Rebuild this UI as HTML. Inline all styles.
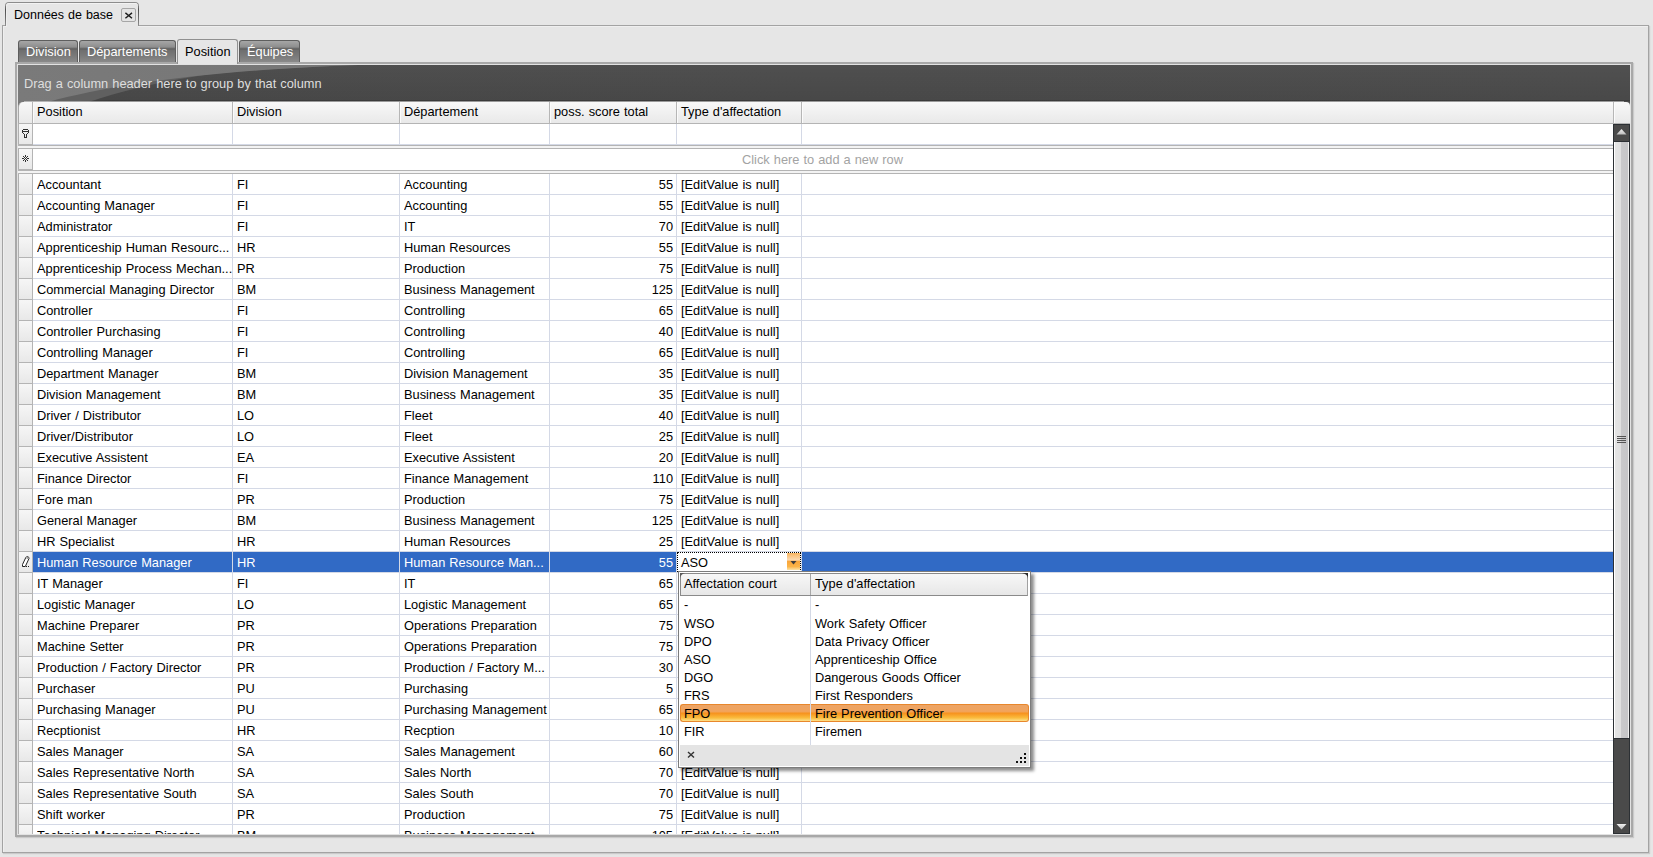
<!DOCTYPE html><html><head><meta charset="utf-8"><style>
*{margin:0;padding:0;box-sizing:border-box}
html,body{width:1653px;height:857px;overflow:hidden;background:#e6e6e6;font-family:"Liberation Sans", sans-serif;font-size:12.8px;word-spacing:0.5px;color:#000}
.a{position:absolute}
.t{position:absolute;white-space:pre;line-height:22px;height:22px}
</style></head><body><div class="a" style="left:2px;top:25px;width:1647px;height:828px;border:1px solid #a3a3a3;box-shadow:1px 1px 1px rgba(0,0,0,0.12);"></div><div class="a" style="left:3px;top:26px;width:1645px;height:826px;border-left:1px solid #efefef;border-top:1px solid #efefef;"></div><div class="a" style="left:5px;top:2px;width:134px;height:24px;border:1px solid #8c8c8c;border-bottom:none;border-radius:4px 4px 0 0;background:#e6e6e6;"></div><div class="a" style="left:6px;top:25px;width:132px;height:2px;background:#e6e6e6;"></div><div class="a" style="left:5px;top:6px;width:1px;height:19px;background:linear-gradient(#7a7a7a,#505050 20%,#6a6a6a 60%,#8c8c8c)"></div><div class="a" style="left:138px;top:6px;width:1px;height:19px;background:linear-gradient(#7a7a7a,#505050 20%,#6a6a6a 60%,#8c8c8c)"></div><div class="a" style="left:6px;top:3px;width:132px;height:24px;border-left:1px solid #eeeeee;border-top:1px solid #f2f2f2;border-radius:3px 3px 0 0;"></div><div class="t" style="left:14px;top:4px;font-size:12.5px">Données de base</div><div class="a" style="left:121px;top:8px;width:15px;height:14px;border:1px solid #a6a6a6;border-radius:2px;background:#e4e4e4;"></div><svg class="a" style="left:121px;top:8px" width="15" height="14"><path d="M4.4 4.9 L11 10.2 M11 4.9 L4.4 10.2" stroke="#1e1e1e" stroke-width="1.4"/></svg><div class="a" style="left:18px;top:40px;width:60px;height:23px;border:1px solid #5e5e5e;border-bottom:none;border-radius:3px 3px 0 0;background:linear-gradient(#a6a6a6 0px,#8e8e8e 6px,#5c5c5c 8px,#6e6e6e 9px,#7a7a7a 15px,#8c8c8c 22px);"></div><div class="t" style="left:26px;top:41px;color:#fff">Division</div><div class="a" style="left:79px;top:40px;width:97px;height:23px;border:1px solid #5e5e5e;border-bottom:none;border-radius:3px 3px 0 0;background:linear-gradient(#a6a6a6 0px,#8e8e8e 6px,#5c5c5c 8px,#6e6e6e 9px,#7a7a7a 15px,#8c8c8c 22px);"></div><div class="t" style="left:87px;top:41px;color:#fff">Départements</div><div class="a" style="left:239px;top:40px;width:61px;height:23px;border:1px solid #5e5e5e;border-bottom:none;border-radius:3px 3px 0 0;background:linear-gradient(#a6a6a6 0px,#8e8e8e 6px,#5c5c5c 8px,#6e6e6e 9px,#7a7a7a 15px,#8c8c8c 22px);"></div><div class="t" style="left:247px;top:41px;color:#fff">Équipes</div><div class="a" style="left:177px;top:39px;width:61px;height:25px;border:1px solid #909090;border-bottom:none;border-radius:3px 3px 0 0;background:#e6e6e6;z-index:3"></div><div class="t" style="left:185px;top:41px;z-index:4">Position</div><div class="a" style="left:15px;top:62px;width:1618px;height:775px;border:2px solid #a8a8a8;background:#e2e2e2;z-index:2;box-shadow:1px 1px 1px rgba(0,0,0,0.12)"></div><div class="a" style="left:0;top:0;width:1653px;height:857px;z-index:2"><div class="a" style="left:18px;top:65px;width:1612px;height:37px;background:#4f4f4f;overflow:hidden"><svg width="1612" height="37" style="position:absolute;left:0;top:0"><defs><linearGradient id="gl" x1="0" y1="0" x2="1" y2="0"><stop offset="0" stop-color="#7a7a7a"/><stop offset="1" stop-color="#767676"/></linearGradient><linearGradient id="gb" x1="0" y1="0" x2="1" y2="0"><stop offset="0" stop-color="#4e4e4e"/><stop offset="1" stop-color="#505050"/></linearGradient><linearGradient id="gv" x1="0" y1="0" x2="0" y2="1"><stop offset="0" stop-color="#000" stop-opacity="0"/><stop offset="1" stop-color="#000" stop-opacity="0.1"/></linearGradient></defs><rect width="1612" height="37" fill="url(#gb)"/><rect width="1612" height="37" fill="url(#gv)"/><path d="M0 0 L340 0 C 240 4, 200 8, 180 11 C 140 17, 100 27, 71 37 L0 37 Z" fill="#606060"/><path d="M0 0 L340 0 C 200 5, 100 18, 30 37 L0 37 Z" fill="url(#gl)"/></svg><div class="t" style="left:6px;top:8px;color:#dedede">Drag a column header here to group by that column</div></div><div class="a" style="left:18px;top:100px;width:1612px;height:1px;background:linear-gradient(90deg,rgba(0,0,0,0) 0px,rgba(0,0,0,0) 60px,rgba(0,0,0,0.18) 90px)"></div><div class="a" style="left:24px;top:101px;width:1600px;height:1px;background:rgba(255,255,255,0.45)"></div><div class="a" style="left:18px;top:102px;width:8px;height:6px;background:#787878"></div><div class="a" style="left:1620px;top:102px;width:10px;height:6px;background:#4f4f4f"></div><div class="a" style="left:18px;top:102px;width:1612px;height:22px;border-radius:5px 4px 0 0;background:linear-gradient(#f8f8f8,#e9e9e9);border-bottom:1px solid #b4b4b4;border-left:1px solid #a8a8a8;overflow:hidden"></div><div class="a" style="left:32px;top:102px;width:1px;height:21px;background:#b6b6b6"></div><div class="a" style="left:33px;top:103px;width:1px;height:20px;background:#fbfbfb"></div><div class="a" style="left:232px;top:102px;width:1px;height:21px;background:#b6b6b6"></div><div class="a" style="left:233px;top:103px;width:1px;height:20px;background:#fbfbfb"></div><div class="a" style="left:399px;top:102px;width:1px;height:21px;background:#b6b6b6"></div><div class="a" style="left:400px;top:103px;width:1px;height:20px;background:#fbfbfb"></div><div class="a" style="left:549px;top:102px;width:1px;height:21px;background:#b6b6b6"></div><div class="a" style="left:550px;top:103px;width:1px;height:20px;background:#fbfbfb"></div><div class="a" style="left:676px;top:102px;width:1px;height:21px;background:#b6b6b6"></div><div class="a" style="left:677px;top:103px;width:1px;height:20px;background:#fbfbfb"></div><div class="a" style="left:801px;top:102px;width:1px;height:21px;background:#b6b6b6"></div><div class="a" style="left:802px;top:103px;width:1px;height:20px;background:#fbfbfb"></div><div class="a" style="left:1613px;top:102px;width:1px;height:21px;background:#b6b6b6"></div><div class="a" style="left:1614px;top:103px;width:1px;height:20px;background:#fbfbfb"></div><div class="t" style="left:37px;top:101px">Position</div><div class="t" style="left:237px;top:101px">Division</div><div class="t" style="left:404px;top:101px">Département</div><div class="t" style="left:554px;top:101px">poss. score total</div><div class="t" style="left:681px;top:101px">Type d'affectation</div><div class="a" style="left:33px;top:124px;width:1580px;height:710px;background:#fff"></div><div class="a" style="left:18px;top:124px;width:15px;height:710px;background:#e2e2e2;border-left:1px solid #b0b0b0;border-right:1px solid #b4b4b4"></div><div class="a" style="left:19px;top:124px;width:13px;height:20px;background:linear-gradient(#f6f6f6,#e8e8e8)"></div><div class="a" style="left:18px;top:144px;width:1595px;height:1px;background:#d4d9e6"></div><div class="a" style="left:18px;top:144px;width:15px;height:1px;background:#b4b4b4"></div><div class="a" style="left:232px;top:124px;width:1px;height:20px;background:#d4d9e6"></div><div class="a" style="left:399px;top:124px;width:1px;height:20px;background:#d4d9e6"></div><div class="a" style="left:549px;top:124px;width:1px;height:20px;background:#d4d9e6"></div><div class="a" style="left:676px;top:124px;width:1px;height:20px;background:#d4d9e6"></div><div class="a" style="left:801px;top:124px;width:1px;height:20px;background:#d4d9e6"></div><div class="a" style="left:18px;top:145px;width:1595px;height:1px;background:#b4b4b4"></div><div class="a" style="left:18px;top:146px;width:1595px;height:2px;background:#f3f3f3"></div><div class="a" style="left:18px;top:148px;width:1595px;height:1px;background:#b4b4b4"></div><div class="a" style="left:19px;top:149px;width:13px;height:20px;background:linear-gradient(#f6f6f6,#e8e8e8)"></div><div class="a" style="left:18px;top:169px;width:15px;height:1px;background:#b4b4b4"></div><div class="a" style="left:18px;top:170px;width:1595px;height:1px;background:#b4b4b4"></div><div class="a" style="left:18px;top:171px;width:1595px;height:2px;background:#f3f3f3"></div><div class="a" style="left:18px;top:173px;width:1595px;height:1px;background:#b4b4b4"></div><div class="t" style="left:742px;top:149px;color:#a3a3a3">Click here to add a new row</div><svg class="a" style="left:19px;top:125px" width="13" height="16"><rect x="4" y="4" width="1" height="1" fill="#303030"/><rect x="5" y="4" width="1" height="1" fill="#303030"/><rect x="6" y="4" width="1" height="1" fill="#303030"/><rect x="7" y="4" width="1" height="1" fill="#303030"/><rect x="8" y="4" width="1" height="1" fill="#303030"/><rect x="4" y="6" width="1" height="1" fill="#303030"/><rect x="5" y="6" width="1" height="1" fill="#303030"/><rect x="6" y="6" width="1" height="1" fill="#303030"/><rect x="7" y="6" width="1" height="1" fill="#303030"/><rect x="8" y="6" width="1" height="1" fill="#303030"/><rect x="3" y="5" width="1" height="1" fill="#303030"/><rect x="3" y="6" width="1" height="1" fill="#303030"/><rect x="3" y="7" width="1" height="1" fill="#303030"/><rect x="9" y="5" width="1" height="1" fill="#303030"/><rect x="9" y="6" width="1" height="1" fill="#303030"/><rect x="9" y="7" width="1" height="1" fill="#303030"/><rect x="4" y="8" width="1" height="1" fill="#303030"/><rect x="8" y="8" width="1" height="1" fill="#303030"/><rect x="5" y="9" width="1" height="1" fill="#303030"/><rect x="5" y="10" width="1" height="1" fill="#303030"/><rect x="5" y="11" width="1" height="1" fill="#303030"/><rect x="5" y="12" width="1" height="1" fill="#303030"/><rect x="7" y="9" width="1" height="1" fill="#303030"/><rect x="7" y="10" width="1" height="1" fill="#303030"/><rect x="7" y="11" width="1" height="1" fill="#303030"/><rect x="7" y="12" width="1" height="1" fill="#303030"/><rect x="6" y="12" width="1" height="1" fill="#303030"/></svg><svg class="a" style="left:19px;top:150px" width="13" height="16"><rect x="6" y="5" width="1" height="1" fill="#303030"/><rect x="6" y="6" width="1" height="1" fill="#303030"/><rect x="4" y="6" width="1" height="1" fill="#303030"/><rect x="8" y="6" width="1" height="1" fill="#303030"/><rect x="5" y="7" width="1" height="1" fill="#303030"/><rect x="7" y="7" width="1" height="1" fill="#303030"/><rect x="3" y="8" width="1" height="1" fill="#303030"/><rect x="4" y="8" width="1" height="1" fill="#303030"/><rect x="6" y="8" width="1" height="1" fill="#303030"/><rect x="8" y="8" width="1" height="1" fill="#303030"/><rect x="9" y="8" width="1" height="1" fill="#303030"/><rect x="5" y="9" width="1" height="1" fill="#303030"/><rect x="7" y="9" width="1" height="1" fill="#303030"/><rect x="4" y="10" width="1" height="1" fill="#303030"/><rect x="8" y="10" width="1" height="1" fill="#303030"/><rect x="6" y="10" width="1" height="1" fill="#303030"/><rect x="6" y="11" width="1" height="1" fill="#303030"/></svg><div class="a" style="left:0;top:0;width:1653px;height:834px;overflow:hidden"><div class="a" style="left:19px;top:174px;width:13px;height:20px;background:linear-gradient(#f6f6f6,#e8e8e8)"></div><div class="a" style="left:18px;top:194px;width:15px;height:1px;background:#b4b4b4"></div><div class="a" style="left:33px;top:194px;width:1580px;height:1px;background:#d4d9e6"></div><div class="a" style="left:232px;top:174px;width:1px;height:21px;background:#d4d9e6"></div><div class="a" style="left:399px;top:174px;width:1px;height:21px;background:#d4d9e6"></div><div class="a" style="left:549px;top:174px;width:1px;height:21px;background:#d4d9e6"></div><div class="a" style="left:676px;top:174px;width:1px;height:21px;background:#d4d9e6"></div><div class="a" style="left:801px;top:174px;width:1px;height:21px;background:#d4d9e6"></div><div class="t" style="left:37px;width:195px;overflow:hidden;top:174px;color:#000">Accountant</div><div class="t" style="left:237px;width:162px;overflow:hidden;top:174px;color:#000">FI</div><div class="t" style="left:404px;width:145px;overflow:hidden;top:174px;color:#000">Accounting</div><div class="t" style="left:550px;width:123px;text-align:right;top:174px;color:#000">55</div><div class="t" style="left:681px;top:174px;color:#000">[EditValue is null]</div><div class="a" style="left:19px;top:195px;width:13px;height:20px;background:linear-gradient(#f6f6f6,#e8e8e8)"></div><div class="a" style="left:18px;top:215px;width:15px;height:1px;background:#b4b4b4"></div><div class="a" style="left:33px;top:215px;width:1580px;height:1px;background:#d4d9e6"></div><div class="a" style="left:232px;top:195px;width:1px;height:21px;background:#d4d9e6"></div><div class="a" style="left:399px;top:195px;width:1px;height:21px;background:#d4d9e6"></div><div class="a" style="left:549px;top:195px;width:1px;height:21px;background:#d4d9e6"></div><div class="a" style="left:676px;top:195px;width:1px;height:21px;background:#d4d9e6"></div><div class="a" style="left:801px;top:195px;width:1px;height:21px;background:#d4d9e6"></div><div class="t" style="left:37px;width:195px;overflow:hidden;top:195px;color:#000">Accounting Manager</div><div class="t" style="left:237px;width:162px;overflow:hidden;top:195px;color:#000">FI</div><div class="t" style="left:404px;width:145px;overflow:hidden;top:195px;color:#000">Accounting</div><div class="t" style="left:550px;width:123px;text-align:right;top:195px;color:#000">55</div><div class="t" style="left:681px;top:195px;color:#000">[EditValue is null]</div><div class="a" style="left:19px;top:216px;width:13px;height:20px;background:linear-gradient(#f6f6f6,#e8e8e8)"></div><div class="a" style="left:18px;top:236px;width:15px;height:1px;background:#b4b4b4"></div><div class="a" style="left:33px;top:236px;width:1580px;height:1px;background:#d4d9e6"></div><div class="a" style="left:232px;top:216px;width:1px;height:21px;background:#d4d9e6"></div><div class="a" style="left:399px;top:216px;width:1px;height:21px;background:#d4d9e6"></div><div class="a" style="left:549px;top:216px;width:1px;height:21px;background:#d4d9e6"></div><div class="a" style="left:676px;top:216px;width:1px;height:21px;background:#d4d9e6"></div><div class="a" style="left:801px;top:216px;width:1px;height:21px;background:#d4d9e6"></div><div class="t" style="left:37px;width:195px;overflow:hidden;top:216px;color:#000">Administrator</div><div class="t" style="left:237px;width:162px;overflow:hidden;top:216px;color:#000">FI</div><div class="t" style="left:404px;width:145px;overflow:hidden;top:216px;color:#000">IT</div><div class="t" style="left:550px;width:123px;text-align:right;top:216px;color:#000">70</div><div class="t" style="left:681px;top:216px;color:#000">[EditValue is null]</div><div class="a" style="left:19px;top:237px;width:13px;height:20px;background:linear-gradient(#f6f6f6,#e8e8e8)"></div><div class="a" style="left:18px;top:257px;width:15px;height:1px;background:#b4b4b4"></div><div class="a" style="left:33px;top:257px;width:1580px;height:1px;background:#d4d9e6"></div><div class="a" style="left:232px;top:237px;width:1px;height:21px;background:#d4d9e6"></div><div class="a" style="left:399px;top:237px;width:1px;height:21px;background:#d4d9e6"></div><div class="a" style="left:549px;top:237px;width:1px;height:21px;background:#d4d9e6"></div><div class="a" style="left:676px;top:237px;width:1px;height:21px;background:#d4d9e6"></div><div class="a" style="left:801px;top:237px;width:1px;height:21px;background:#d4d9e6"></div><div class="t" style="left:37px;width:195px;overflow:hidden;top:237px;color:#000">Apprenticeship Human Resourc...</div><div class="t" style="left:237px;width:162px;overflow:hidden;top:237px;color:#000">HR</div><div class="t" style="left:404px;width:145px;overflow:hidden;top:237px;color:#000">Human Resources</div><div class="t" style="left:550px;width:123px;text-align:right;top:237px;color:#000">55</div><div class="t" style="left:681px;top:237px;color:#000">[EditValue is null]</div><div class="a" style="left:19px;top:258px;width:13px;height:20px;background:linear-gradient(#f6f6f6,#e8e8e8)"></div><div class="a" style="left:18px;top:278px;width:15px;height:1px;background:#b4b4b4"></div><div class="a" style="left:33px;top:278px;width:1580px;height:1px;background:#d4d9e6"></div><div class="a" style="left:232px;top:258px;width:1px;height:21px;background:#d4d9e6"></div><div class="a" style="left:399px;top:258px;width:1px;height:21px;background:#d4d9e6"></div><div class="a" style="left:549px;top:258px;width:1px;height:21px;background:#d4d9e6"></div><div class="a" style="left:676px;top:258px;width:1px;height:21px;background:#d4d9e6"></div><div class="a" style="left:801px;top:258px;width:1px;height:21px;background:#d4d9e6"></div><div class="t" style="left:37px;width:195px;overflow:hidden;top:258px;color:#000">Apprenticeship Process Mechan...</div><div class="t" style="left:237px;width:162px;overflow:hidden;top:258px;color:#000">PR</div><div class="t" style="left:404px;width:145px;overflow:hidden;top:258px;color:#000">Production</div><div class="t" style="left:550px;width:123px;text-align:right;top:258px;color:#000">75</div><div class="t" style="left:681px;top:258px;color:#000">[EditValue is null]</div><div class="a" style="left:19px;top:279px;width:13px;height:20px;background:linear-gradient(#f6f6f6,#e8e8e8)"></div><div class="a" style="left:18px;top:299px;width:15px;height:1px;background:#b4b4b4"></div><div class="a" style="left:33px;top:299px;width:1580px;height:1px;background:#d4d9e6"></div><div class="a" style="left:232px;top:279px;width:1px;height:21px;background:#d4d9e6"></div><div class="a" style="left:399px;top:279px;width:1px;height:21px;background:#d4d9e6"></div><div class="a" style="left:549px;top:279px;width:1px;height:21px;background:#d4d9e6"></div><div class="a" style="left:676px;top:279px;width:1px;height:21px;background:#d4d9e6"></div><div class="a" style="left:801px;top:279px;width:1px;height:21px;background:#d4d9e6"></div><div class="t" style="left:37px;width:195px;overflow:hidden;top:279px;color:#000">Commercial Managing Director</div><div class="t" style="left:237px;width:162px;overflow:hidden;top:279px;color:#000">BM</div><div class="t" style="left:404px;width:145px;overflow:hidden;top:279px;color:#000">Business Management</div><div class="t" style="left:550px;width:123px;text-align:right;top:279px;color:#000">125</div><div class="t" style="left:681px;top:279px;color:#000">[EditValue is null]</div><div class="a" style="left:19px;top:300px;width:13px;height:20px;background:linear-gradient(#f6f6f6,#e8e8e8)"></div><div class="a" style="left:18px;top:320px;width:15px;height:1px;background:#b4b4b4"></div><div class="a" style="left:33px;top:320px;width:1580px;height:1px;background:#d4d9e6"></div><div class="a" style="left:232px;top:300px;width:1px;height:21px;background:#d4d9e6"></div><div class="a" style="left:399px;top:300px;width:1px;height:21px;background:#d4d9e6"></div><div class="a" style="left:549px;top:300px;width:1px;height:21px;background:#d4d9e6"></div><div class="a" style="left:676px;top:300px;width:1px;height:21px;background:#d4d9e6"></div><div class="a" style="left:801px;top:300px;width:1px;height:21px;background:#d4d9e6"></div><div class="t" style="left:37px;width:195px;overflow:hidden;top:300px;color:#000">Controller</div><div class="t" style="left:237px;width:162px;overflow:hidden;top:300px;color:#000">FI</div><div class="t" style="left:404px;width:145px;overflow:hidden;top:300px;color:#000">Controlling</div><div class="t" style="left:550px;width:123px;text-align:right;top:300px;color:#000">65</div><div class="t" style="left:681px;top:300px;color:#000">[EditValue is null]</div><div class="a" style="left:19px;top:321px;width:13px;height:20px;background:linear-gradient(#f6f6f6,#e8e8e8)"></div><div class="a" style="left:18px;top:341px;width:15px;height:1px;background:#b4b4b4"></div><div class="a" style="left:33px;top:341px;width:1580px;height:1px;background:#d4d9e6"></div><div class="a" style="left:232px;top:321px;width:1px;height:21px;background:#d4d9e6"></div><div class="a" style="left:399px;top:321px;width:1px;height:21px;background:#d4d9e6"></div><div class="a" style="left:549px;top:321px;width:1px;height:21px;background:#d4d9e6"></div><div class="a" style="left:676px;top:321px;width:1px;height:21px;background:#d4d9e6"></div><div class="a" style="left:801px;top:321px;width:1px;height:21px;background:#d4d9e6"></div><div class="t" style="left:37px;width:195px;overflow:hidden;top:321px;color:#000">Controller Purchasing</div><div class="t" style="left:237px;width:162px;overflow:hidden;top:321px;color:#000">FI</div><div class="t" style="left:404px;width:145px;overflow:hidden;top:321px;color:#000">Controlling</div><div class="t" style="left:550px;width:123px;text-align:right;top:321px;color:#000">40</div><div class="t" style="left:681px;top:321px;color:#000">[EditValue is null]</div><div class="a" style="left:19px;top:342px;width:13px;height:20px;background:linear-gradient(#f6f6f6,#e8e8e8)"></div><div class="a" style="left:18px;top:362px;width:15px;height:1px;background:#b4b4b4"></div><div class="a" style="left:33px;top:362px;width:1580px;height:1px;background:#d4d9e6"></div><div class="a" style="left:232px;top:342px;width:1px;height:21px;background:#d4d9e6"></div><div class="a" style="left:399px;top:342px;width:1px;height:21px;background:#d4d9e6"></div><div class="a" style="left:549px;top:342px;width:1px;height:21px;background:#d4d9e6"></div><div class="a" style="left:676px;top:342px;width:1px;height:21px;background:#d4d9e6"></div><div class="a" style="left:801px;top:342px;width:1px;height:21px;background:#d4d9e6"></div><div class="t" style="left:37px;width:195px;overflow:hidden;top:342px;color:#000">Controlling Manager</div><div class="t" style="left:237px;width:162px;overflow:hidden;top:342px;color:#000">FI</div><div class="t" style="left:404px;width:145px;overflow:hidden;top:342px;color:#000">Controlling</div><div class="t" style="left:550px;width:123px;text-align:right;top:342px;color:#000">65</div><div class="t" style="left:681px;top:342px;color:#000">[EditValue is null]</div><div class="a" style="left:19px;top:363px;width:13px;height:20px;background:linear-gradient(#f6f6f6,#e8e8e8)"></div><div class="a" style="left:18px;top:383px;width:15px;height:1px;background:#b4b4b4"></div><div class="a" style="left:33px;top:383px;width:1580px;height:1px;background:#d4d9e6"></div><div class="a" style="left:232px;top:363px;width:1px;height:21px;background:#d4d9e6"></div><div class="a" style="left:399px;top:363px;width:1px;height:21px;background:#d4d9e6"></div><div class="a" style="left:549px;top:363px;width:1px;height:21px;background:#d4d9e6"></div><div class="a" style="left:676px;top:363px;width:1px;height:21px;background:#d4d9e6"></div><div class="a" style="left:801px;top:363px;width:1px;height:21px;background:#d4d9e6"></div><div class="t" style="left:37px;width:195px;overflow:hidden;top:363px;color:#000">Department Manager</div><div class="t" style="left:237px;width:162px;overflow:hidden;top:363px;color:#000">BM</div><div class="t" style="left:404px;width:145px;overflow:hidden;top:363px;color:#000">Division Management</div><div class="t" style="left:550px;width:123px;text-align:right;top:363px;color:#000">35</div><div class="t" style="left:681px;top:363px;color:#000">[EditValue is null]</div><div class="a" style="left:19px;top:384px;width:13px;height:20px;background:linear-gradient(#f6f6f6,#e8e8e8)"></div><div class="a" style="left:18px;top:404px;width:15px;height:1px;background:#b4b4b4"></div><div class="a" style="left:33px;top:404px;width:1580px;height:1px;background:#d4d9e6"></div><div class="a" style="left:232px;top:384px;width:1px;height:21px;background:#d4d9e6"></div><div class="a" style="left:399px;top:384px;width:1px;height:21px;background:#d4d9e6"></div><div class="a" style="left:549px;top:384px;width:1px;height:21px;background:#d4d9e6"></div><div class="a" style="left:676px;top:384px;width:1px;height:21px;background:#d4d9e6"></div><div class="a" style="left:801px;top:384px;width:1px;height:21px;background:#d4d9e6"></div><div class="t" style="left:37px;width:195px;overflow:hidden;top:384px;color:#000">Division Management</div><div class="t" style="left:237px;width:162px;overflow:hidden;top:384px;color:#000">BM</div><div class="t" style="left:404px;width:145px;overflow:hidden;top:384px;color:#000">Business Management</div><div class="t" style="left:550px;width:123px;text-align:right;top:384px;color:#000">35</div><div class="t" style="left:681px;top:384px;color:#000">[EditValue is null]</div><div class="a" style="left:19px;top:405px;width:13px;height:20px;background:linear-gradient(#f6f6f6,#e8e8e8)"></div><div class="a" style="left:18px;top:425px;width:15px;height:1px;background:#b4b4b4"></div><div class="a" style="left:33px;top:425px;width:1580px;height:1px;background:#d4d9e6"></div><div class="a" style="left:232px;top:405px;width:1px;height:21px;background:#d4d9e6"></div><div class="a" style="left:399px;top:405px;width:1px;height:21px;background:#d4d9e6"></div><div class="a" style="left:549px;top:405px;width:1px;height:21px;background:#d4d9e6"></div><div class="a" style="left:676px;top:405px;width:1px;height:21px;background:#d4d9e6"></div><div class="a" style="left:801px;top:405px;width:1px;height:21px;background:#d4d9e6"></div><div class="t" style="left:37px;width:195px;overflow:hidden;top:405px;color:#000">Driver / Distributor</div><div class="t" style="left:237px;width:162px;overflow:hidden;top:405px;color:#000">LO</div><div class="t" style="left:404px;width:145px;overflow:hidden;top:405px;color:#000">Fleet</div><div class="t" style="left:550px;width:123px;text-align:right;top:405px;color:#000">40</div><div class="t" style="left:681px;top:405px;color:#000">[EditValue is null]</div><div class="a" style="left:19px;top:426px;width:13px;height:20px;background:linear-gradient(#f6f6f6,#e8e8e8)"></div><div class="a" style="left:18px;top:446px;width:15px;height:1px;background:#b4b4b4"></div><div class="a" style="left:33px;top:446px;width:1580px;height:1px;background:#d4d9e6"></div><div class="a" style="left:232px;top:426px;width:1px;height:21px;background:#d4d9e6"></div><div class="a" style="left:399px;top:426px;width:1px;height:21px;background:#d4d9e6"></div><div class="a" style="left:549px;top:426px;width:1px;height:21px;background:#d4d9e6"></div><div class="a" style="left:676px;top:426px;width:1px;height:21px;background:#d4d9e6"></div><div class="a" style="left:801px;top:426px;width:1px;height:21px;background:#d4d9e6"></div><div class="t" style="left:37px;width:195px;overflow:hidden;top:426px;color:#000">Driver/Distributor</div><div class="t" style="left:237px;width:162px;overflow:hidden;top:426px;color:#000">LO</div><div class="t" style="left:404px;width:145px;overflow:hidden;top:426px;color:#000">Fleet</div><div class="t" style="left:550px;width:123px;text-align:right;top:426px;color:#000">25</div><div class="t" style="left:681px;top:426px;color:#000">[EditValue is null]</div><div class="a" style="left:19px;top:447px;width:13px;height:20px;background:linear-gradient(#f6f6f6,#e8e8e8)"></div><div class="a" style="left:18px;top:467px;width:15px;height:1px;background:#b4b4b4"></div><div class="a" style="left:33px;top:467px;width:1580px;height:1px;background:#d4d9e6"></div><div class="a" style="left:232px;top:447px;width:1px;height:21px;background:#d4d9e6"></div><div class="a" style="left:399px;top:447px;width:1px;height:21px;background:#d4d9e6"></div><div class="a" style="left:549px;top:447px;width:1px;height:21px;background:#d4d9e6"></div><div class="a" style="left:676px;top:447px;width:1px;height:21px;background:#d4d9e6"></div><div class="a" style="left:801px;top:447px;width:1px;height:21px;background:#d4d9e6"></div><div class="t" style="left:37px;width:195px;overflow:hidden;top:447px;color:#000">Executive Assistent</div><div class="t" style="left:237px;width:162px;overflow:hidden;top:447px;color:#000">EA</div><div class="t" style="left:404px;width:145px;overflow:hidden;top:447px;color:#000">Executive Assistent</div><div class="t" style="left:550px;width:123px;text-align:right;top:447px;color:#000">20</div><div class="t" style="left:681px;top:447px;color:#000">[EditValue is null]</div><div class="a" style="left:19px;top:468px;width:13px;height:20px;background:linear-gradient(#f6f6f6,#e8e8e8)"></div><div class="a" style="left:18px;top:488px;width:15px;height:1px;background:#b4b4b4"></div><div class="a" style="left:33px;top:488px;width:1580px;height:1px;background:#d4d9e6"></div><div class="a" style="left:232px;top:468px;width:1px;height:21px;background:#d4d9e6"></div><div class="a" style="left:399px;top:468px;width:1px;height:21px;background:#d4d9e6"></div><div class="a" style="left:549px;top:468px;width:1px;height:21px;background:#d4d9e6"></div><div class="a" style="left:676px;top:468px;width:1px;height:21px;background:#d4d9e6"></div><div class="a" style="left:801px;top:468px;width:1px;height:21px;background:#d4d9e6"></div><div class="t" style="left:37px;width:195px;overflow:hidden;top:468px;color:#000">Finance Director</div><div class="t" style="left:237px;width:162px;overflow:hidden;top:468px;color:#000">FI</div><div class="t" style="left:404px;width:145px;overflow:hidden;top:468px;color:#000">Finance Management</div><div class="t" style="left:550px;width:123px;text-align:right;top:468px;color:#000">110</div><div class="t" style="left:681px;top:468px;color:#000">[EditValue is null]</div><div class="a" style="left:19px;top:489px;width:13px;height:20px;background:linear-gradient(#f6f6f6,#e8e8e8)"></div><div class="a" style="left:18px;top:509px;width:15px;height:1px;background:#b4b4b4"></div><div class="a" style="left:33px;top:509px;width:1580px;height:1px;background:#d4d9e6"></div><div class="a" style="left:232px;top:489px;width:1px;height:21px;background:#d4d9e6"></div><div class="a" style="left:399px;top:489px;width:1px;height:21px;background:#d4d9e6"></div><div class="a" style="left:549px;top:489px;width:1px;height:21px;background:#d4d9e6"></div><div class="a" style="left:676px;top:489px;width:1px;height:21px;background:#d4d9e6"></div><div class="a" style="left:801px;top:489px;width:1px;height:21px;background:#d4d9e6"></div><div class="t" style="left:37px;width:195px;overflow:hidden;top:489px;color:#000">Fore man</div><div class="t" style="left:237px;width:162px;overflow:hidden;top:489px;color:#000">PR</div><div class="t" style="left:404px;width:145px;overflow:hidden;top:489px;color:#000">Production</div><div class="t" style="left:550px;width:123px;text-align:right;top:489px;color:#000">75</div><div class="t" style="left:681px;top:489px;color:#000">[EditValue is null]</div><div class="a" style="left:19px;top:510px;width:13px;height:20px;background:linear-gradient(#f6f6f6,#e8e8e8)"></div><div class="a" style="left:18px;top:530px;width:15px;height:1px;background:#b4b4b4"></div><div class="a" style="left:33px;top:530px;width:1580px;height:1px;background:#d4d9e6"></div><div class="a" style="left:232px;top:510px;width:1px;height:21px;background:#d4d9e6"></div><div class="a" style="left:399px;top:510px;width:1px;height:21px;background:#d4d9e6"></div><div class="a" style="left:549px;top:510px;width:1px;height:21px;background:#d4d9e6"></div><div class="a" style="left:676px;top:510px;width:1px;height:21px;background:#d4d9e6"></div><div class="a" style="left:801px;top:510px;width:1px;height:21px;background:#d4d9e6"></div><div class="t" style="left:37px;width:195px;overflow:hidden;top:510px;color:#000">General Manager</div><div class="t" style="left:237px;width:162px;overflow:hidden;top:510px;color:#000">BM</div><div class="t" style="left:404px;width:145px;overflow:hidden;top:510px;color:#000">Business Management</div><div class="t" style="left:550px;width:123px;text-align:right;top:510px;color:#000">125</div><div class="t" style="left:681px;top:510px;color:#000">[EditValue is null]</div><div class="a" style="left:19px;top:531px;width:13px;height:20px;background:linear-gradient(#f6f6f6,#e8e8e8)"></div><div class="a" style="left:18px;top:551px;width:15px;height:1px;background:#b4b4b4"></div><div class="a" style="left:33px;top:551px;width:1580px;height:1px;background:#d4d9e6"></div><div class="a" style="left:232px;top:531px;width:1px;height:21px;background:#d4d9e6"></div><div class="a" style="left:399px;top:531px;width:1px;height:21px;background:#d4d9e6"></div><div class="a" style="left:549px;top:531px;width:1px;height:21px;background:#d4d9e6"></div><div class="a" style="left:676px;top:531px;width:1px;height:21px;background:#d4d9e6"></div><div class="a" style="left:801px;top:531px;width:1px;height:21px;background:#d4d9e6"></div><div class="t" style="left:37px;width:195px;overflow:hidden;top:531px;color:#000">HR Specialist</div><div class="t" style="left:237px;width:162px;overflow:hidden;top:531px;color:#000">HR</div><div class="t" style="left:404px;width:145px;overflow:hidden;top:531px;color:#000">Human Resources</div><div class="t" style="left:550px;width:123px;text-align:right;top:531px;color:#000">25</div><div class="t" style="left:681px;top:531px;color:#000">[EditValue is null]</div><div class="a" style="left:19px;top:552px;width:13px;height:20px;background:linear-gradient(#f6f6f6,#e8e8e8)"></div><div class="a" style="left:18px;top:572px;width:15px;height:1px;background:#b4b4b4"></div><div class="a" style="left:33px;top:552px;width:1580px;height:20px;background:#316ac5"></div><div class="a" style="left:33px;top:572px;width:1580px;height:1px;background:#d4d9e6"></div><div class="a" style="left:232px;top:552px;width:1px;height:21px;background:#d4d9e6"></div><div class="a" style="left:399px;top:552px;width:1px;height:21px;background:#d4d9e6"></div><div class="a" style="left:549px;top:552px;width:1px;height:21px;background:#d4d9e6"></div><div class="a" style="left:676px;top:552px;width:1px;height:21px;background:#d4d9e6"></div><div class="a" style="left:801px;top:552px;width:1px;height:21px;background:#d4d9e6"></div><div class="t" style="left:37px;width:195px;overflow:hidden;top:552px;color:#fff">Human Resource Manager</div><div class="t" style="left:237px;width:162px;overflow:hidden;top:552px;color:#fff">HR</div><div class="t" style="left:404px;width:145px;overflow:hidden;top:552px;color:#fff">Human Resource Man...</div><div class="t" style="left:550px;width:123px;text-align:right;top:552px;color:#fff">55</div><div class="a" style="left:19px;top:573px;width:13px;height:20px;background:linear-gradient(#f6f6f6,#e8e8e8)"></div><div class="a" style="left:18px;top:593px;width:15px;height:1px;background:#b4b4b4"></div><div class="a" style="left:33px;top:593px;width:1580px;height:1px;background:#d4d9e6"></div><div class="a" style="left:232px;top:573px;width:1px;height:21px;background:#d4d9e6"></div><div class="a" style="left:399px;top:573px;width:1px;height:21px;background:#d4d9e6"></div><div class="a" style="left:549px;top:573px;width:1px;height:21px;background:#d4d9e6"></div><div class="a" style="left:676px;top:573px;width:1px;height:21px;background:#d4d9e6"></div><div class="a" style="left:801px;top:573px;width:1px;height:21px;background:#d4d9e6"></div><div class="t" style="left:37px;width:195px;overflow:hidden;top:573px;color:#000">IT Manager</div><div class="t" style="left:237px;width:162px;overflow:hidden;top:573px;color:#000">FI</div><div class="t" style="left:404px;width:145px;overflow:hidden;top:573px;color:#000">IT</div><div class="t" style="left:550px;width:123px;text-align:right;top:573px;color:#000">65</div><div class="t" style="left:681px;top:573px;color:#000">[EditValue is null]</div><div class="a" style="left:19px;top:594px;width:13px;height:20px;background:linear-gradient(#f6f6f6,#e8e8e8)"></div><div class="a" style="left:18px;top:614px;width:15px;height:1px;background:#b4b4b4"></div><div class="a" style="left:33px;top:614px;width:1580px;height:1px;background:#d4d9e6"></div><div class="a" style="left:232px;top:594px;width:1px;height:21px;background:#d4d9e6"></div><div class="a" style="left:399px;top:594px;width:1px;height:21px;background:#d4d9e6"></div><div class="a" style="left:549px;top:594px;width:1px;height:21px;background:#d4d9e6"></div><div class="a" style="left:676px;top:594px;width:1px;height:21px;background:#d4d9e6"></div><div class="a" style="left:801px;top:594px;width:1px;height:21px;background:#d4d9e6"></div><div class="t" style="left:37px;width:195px;overflow:hidden;top:594px;color:#000">Logistic Manager</div><div class="t" style="left:237px;width:162px;overflow:hidden;top:594px;color:#000">LO</div><div class="t" style="left:404px;width:145px;overflow:hidden;top:594px;color:#000">Logistic Management</div><div class="t" style="left:550px;width:123px;text-align:right;top:594px;color:#000">65</div><div class="t" style="left:681px;top:594px;color:#000">[EditValue is null]</div><div class="a" style="left:19px;top:615px;width:13px;height:20px;background:linear-gradient(#f6f6f6,#e8e8e8)"></div><div class="a" style="left:18px;top:635px;width:15px;height:1px;background:#b4b4b4"></div><div class="a" style="left:33px;top:635px;width:1580px;height:1px;background:#d4d9e6"></div><div class="a" style="left:232px;top:615px;width:1px;height:21px;background:#d4d9e6"></div><div class="a" style="left:399px;top:615px;width:1px;height:21px;background:#d4d9e6"></div><div class="a" style="left:549px;top:615px;width:1px;height:21px;background:#d4d9e6"></div><div class="a" style="left:676px;top:615px;width:1px;height:21px;background:#d4d9e6"></div><div class="a" style="left:801px;top:615px;width:1px;height:21px;background:#d4d9e6"></div><div class="t" style="left:37px;width:195px;overflow:hidden;top:615px;color:#000">Machine Preparer</div><div class="t" style="left:237px;width:162px;overflow:hidden;top:615px;color:#000">PR</div><div class="t" style="left:404px;width:145px;overflow:hidden;top:615px;color:#000">Operations Preparation</div><div class="t" style="left:550px;width:123px;text-align:right;top:615px;color:#000">75</div><div class="t" style="left:681px;top:615px;color:#000">[EditValue is null]</div><div class="a" style="left:19px;top:636px;width:13px;height:20px;background:linear-gradient(#f6f6f6,#e8e8e8)"></div><div class="a" style="left:18px;top:656px;width:15px;height:1px;background:#b4b4b4"></div><div class="a" style="left:33px;top:656px;width:1580px;height:1px;background:#d4d9e6"></div><div class="a" style="left:232px;top:636px;width:1px;height:21px;background:#d4d9e6"></div><div class="a" style="left:399px;top:636px;width:1px;height:21px;background:#d4d9e6"></div><div class="a" style="left:549px;top:636px;width:1px;height:21px;background:#d4d9e6"></div><div class="a" style="left:676px;top:636px;width:1px;height:21px;background:#d4d9e6"></div><div class="a" style="left:801px;top:636px;width:1px;height:21px;background:#d4d9e6"></div><div class="t" style="left:37px;width:195px;overflow:hidden;top:636px;color:#000">Machine Setter</div><div class="t" style="left:237px;width:162px;overflow:hidden;top:636px;color:#000">PR</div><div class="t" style="left:404px;width:145px;overflow:hidden;top:636px;color:#000">Operations Preparation</div><div class="t" style="left:550px;width:123px;text-align:right;top:636px;color:#000">75</div><div class="t" style="left:681px;top:636px;color:#000">[EditValue is null]</div><div class="a" style="left:19px;top:657px;width:13px;height:20px;background:linear-gradient(#f6f6f6,#e8e8e8)"></div><div class="a" style="left:18px;top:677px;width:15px;height:1px;background:#b4b4b4"></div><div class="a" style="left:33px;top:677px;width:1580px;height:1px;background:#d4d9e6"></div><div class="a" style="left:232px;top:657px;width:1px;height:21px;background:#d4d9e6"></div><div class="a" style="left:399px;top:657px;width:1px;height:21px;background:#d4d9e6"></div><div class="a" style="left:549px;top:657px;width:1px;height:21px;background:#d4d9e6"></div><div class="a" style="left:676px;top:657px;width:1px;height:21px;background:#d4d9e6"></div><div class="a" style="left:801px;top:657px;width:1px;height:21px;background:#d4d9e6"></div><div class="t" style="left:37px;width:195px;overflow:hidden;top:657px;color:#000">Production / Factory Director</div><div class="t" style="left:237px;width:162px;overflow:hidden;top:657px;color:#000">PR</div><div class="t" style="left:404px;width:145px;overflow:hidden;top:657px;color:#000">Production / Factory M...</div><div class="t" style="left:550px;width:123px;text-align:right;top:657px;color:#000">30</div><div class="t" style="left:681px;top:657px;color:#000">[EditValue is null]</div><div class="a" style="left:19px;top:678px;width:13px;height:20px;background:linear-gradient(#f6f6f6,#e8e8e8)"></div><div class="a" style="left:18px;top:698px;width:15px;height:1px;background:#b4b4b4"></div><div class="a" style="left:33px;top:698px;width:1580px;height:1px;background:#d4d9e6"></div><div class="a" style="left:232px;top:678px;width:1px;height:21px;background:#d4d9e6"></div><div class="a" style="left:399px;top:678px;width:1px;height:21px;background:#d4d9e6"></div><div class="a" style="left:549px;top:678px;width:1px;height:21px;background:#d4d9e6"></div><div class="a" style="left:676px;top:678px;width:1px;height:21px;background:#d4d9e6"></div><div class="a" style="left:801px;top:678px;width:1px;height:21px;background:#d4d9e6"></div><div class="t" style="left:37px;width:195px;overflow:hidden;top:678px;color:#000">Purchaser</div><div class="t" style="left:237px;width:162px;overflow:hidden;top:678px;color:#000">PU</div><div class="t" style="left:404px;width:145px;overflow:hidden;top:678px;color:#000">Purchasing</div><div class="t" style="left:550px;width:123px;text-align:right;top:678px;color:#000">5</div><div class="t" style="left:681px;top:678px;color:#000">[EditValue is null]</div><div class="a" style="left:19px;top:699px;width:13px;height:20px;background:linear-gradient(#f6f6f6,#e8e8e8)"></div><div class="a" style="left:18px;top:719px;width:15px;height:1px;background:#b4b4b4"></div><div class="a" style="left:33px;top:719px;width:1580px;height:1px;background:#d4d9e6"></div><div class="a" style="left:232px;top:699px;width:1px;height:21px;background:#d4d9e6"></div><div class="a" style="left:399px;top:699px;width:1px;height:21px;background:#d4d9e6"></div><div class="a" style="left:549px;top:699px;width:1px;height:21px;background:#d4d9e6"></div><div class="a" style="left:676px;top:699px;width:1px;height:21px;background:#d4d9e6"></div><div class="a" style="left:801px;top:699px;width:1px;height:21px;background:#d4d9e6"></div><div class="t" style="left:37px;width:195px;overflow:hidden;top:699px;color:#000">Purchasing Manager</div><div class="t" style="left:237px;width:162px;overflow:hidden;top:699px;color:#000">PU</div><div class="t" style="left:404px;width:145px;overflow:hidden;top:699px;color:#000">Purchasing Management</div><div class="t" style="left:550px;width:123px;text-align:right;top:699px;color:#000">65</div><div class="t" style="left:681px;top:699px;color:#000">[EditValue is null]</div><div class="a" style="left:19px;top:720px;width:13px;height:20px;background:linear-gradient(#f6f6f6,#e8e8e8)"></div><div class="a" style="left:18px;top:740px;width:15px;height:1px;background:#b4b4b4"></div><div class="a" style="left:33px;top:740px;width:1580px;height:1px;background:#d4d9e6"></div><div class="a" style="left:232px;top:720px;width:1px;height:21px;background:#d4d9e6"></div><div class="a" style="left:399px;top:720px;width:1px;height:21px;background:#d4d9e6"></div><div class="a" style="left:549px;top:720px;width:1px;height:21px;background:#d4d9e6"></div><div class="a" style="left:676px;top:720px;width:1px;height:21px;background:#d4d9e6"></div><div class="a" style="left:801px;top:720px;width:1px;height:21px;background:#d4d9e6"></div><div class="t" style="left:37px;width:195px;overflow:hidden;top:720px;color:#000">Recptionist</div><div class="t" style="left:237px;width:162px;overflow:hidden;top:720px;color:#000">HR</div><div class="t" style="left:404px;width:145px;overflow:hidden;top:720px;color:#000">Recption</div><div class="t" style="left:550px;width:123px;text-align:right;top:720px;color:#000">10</div><div class="t" style="left:681px;top:720px;color:#000">[EditValue is null]</div><div class="a" style="left:19px;top:741px;width:13px;height:20px;background:linear-gradient(#f6f6f6,#e8e8e8)"></div><div class="a" style="left:18px;top:761px;width:15px;height:1px;background:#b4b4b4"></div><div class="a" style="left:33px;top:761px;width:1580px;height:1px;background:#d4d9e6"></div><div class="a" style="left:232px;top:741px;width:1px;height:21px;background:#d4d9e6"></div><div class="a" style="left:399px;top:741px;width:1px;height:21px;background:#d4d9e6"></div><div class="a" style="left:549px;top:741px;width:1px;height:21px;background:#d4d9e6"></div><div class="a" style="left:676px;top:741px;width:1px;height:21px;background:#d4d9e6"></div><div class="a" style="left:801px;top:741px;width:1px;height:21px;background:#d4d9e6"></div><div class="t" style="left:37px;width:195px;overflow:hidden;top:741px;color:#000">Sales Manager</div><div class="t" style="left:237px;width:162px;overflow:hidden;top:741px;color:#000">SA</div><div class="t" style="left:404px;width:145px;overflow:hidden;top:741px;color:#000">Sales Management</div><div class="t" style="left:550px;width:123px;text-align:right;top:741px;color:#000">60</div><div class="t" style="left:681px;top:741px;color:#000">[EditValue is null]</div><div class="a" style="left:19px;top:762px;width:13px;height:20px;background:linear-gradient(#f6f6f6,#e8e8e8)"></div><div class="a" style="left:18px;top:782px;width:15px;height:1px;background:#b4b4b4"></div><div class="a" style="left:33px;top:782px;width:1580px;height:1px;background:#d4d9e6"></div><div class="a" style="left:232px;top:762px;width:1px;height:21px;background:#d4d9e6"></div><div class="a" style="left:399px;top:762px;width:1px;height:21px;background:#d4d9e6"></div><div class="a" style="left:549px;top:762px;width:1px;height:21px;background:#d4d9e6"></div><div class="a" style="left:676px;top:762px;width:1px;height:21px;background:#d4d9e6"></div><div class="a" style="left:801px;top:762px;width:1px;height:21px;background:#d4d9e6"></div><div class="t" style="left:37px;width:195px;overflow:hidden;top:762px;color:#000">Sales Representative North</div><div class="t" style="left:237px;width:162px;overflow:hidden;top:762px;color:#000">SA</div><div class="t" style="left:404px;width:145px;overflow:hidden;top:762px;color:#000">Sales North</div><div class="t" style="left:550px;width:123px;text-align:right;top:762px;color:#000">70</div><div class="t" style="left:681px;top:762px;color:#000">[EditValue is null]</div><div class="a" style="left:19px;top:783px;width:13px;height:20px;background:linear-gradient(#f6f6f6,#e8e8e8)"></div><div class="a" style="left:18px;top:803px;width:15px;height:1px;background:#b4b4b4"></div><div class="a" style="left:33px;top:803px;width:1580px;height:1px;background:#d4d9e6"></div><div class="a" style="left:232px;top:783px;width:1px;height:21px;background:#d4d9e6"></div><div class="a" style="left:399px;top:783px;width:1px;height:21px;background:#d4d9e6"></div><div class="a" style="left:549px;top:783px;width:1px;height:21px;background:#d4d9e6"></div><div class="a" style="left:676px;top:783px;width:1px;height:21px;background:#d4d9e6"></div><div class="a" style="left:801px;top:783px;width:1px;height:21px;background:#d4d9e6"></div><div class="t" style="left:37px;width:195px;overflow:hidden;top:783px;color:#000">Sales Representative South</div><div class="t" style="left:237px;width:162px;overflow:hidden;top:783px;color:#000">SA</div><div class="t" style="left:404px;width:145px;overflow:hidden;top:783px;color:#000">Sales South</div><div class="t" style="left:550px;width:123px;text-align:right;top:783px;color:#000">70</div><div class="t" style="left:681px;top:783px;color:#000">[EditValue is null]</div><div class="a" style="left:19px;top:804px;width:13px;height:20px;background:linear-gradient(#f6f6f6,#e8e8e8)"></div><div class="a" style="left:18px;top:824px;width:15px;height:1px;background:#b4b4b4"></div><div class="a" style="left:33px;top:824px;width:1580px;height:1px;background:#d4d9e6"></div><div class="a" style="left:232px;top:804px;width:1px;height:21px;background:#d4d9e6"></div><div class="a" style="left:399px;top:804px;width:1px;height:21px;background:#d4d9e6"></div><div class="a" style="left:549px;top:804px;width:1px;height:21px;background:#d4d9e6"></div><div class="a" style="left:676px;top:804px;width:1px;height:21px;background:#d4d9e6"></div><div class="a" style="left:801px;top:804px;width:1px;height:21px;background:#d4d9e6"></div><div class="t" style="left:37px;width:195px;overflow:hidden;top:804px;color:#000">Shift worker</div><div class="t" style="left:237px;width:162px;overflow:hidden;top:804px;color:#000">PR</div><div class="t" style="left:404px;width:145px;overflow:hidden;top:804px;color:#000">Production</div><div class="t" style="left:550px;width:123px;text-align:right;top:804px;color:#000">75</div><div class="t" style="left:681px;top:804px;color:#000">[EditValue is null]</div><div class="a" style="left:19px;top:825px;width:13px;height:20px;background:linear-gradient(#f6f6f6,#e8e8e8)"></div><div class="a" style="left:18px;top:845px;width:15px;height:1px;background:#b4b4b4"></div><div class="a" style="left:33px;top:845px;width:1580px;height:1px;background:#d4d9e6"></div><div class="a" style="left:232px;top:825px;width:1px;height:21px;background:#d4d9e6"></div><div class="a" style="left:399px;top:825px;width:1px;height:21px;background:#d4d9e6"></div><div class="a" style="left:549px;top:825px;width:1px;height:21px;background:#d4d9e6"></div><div class="a" style="left:676px;top:825px;width:1px;height:21px;background:#d4d9e6"></div><div class="a" style="left:801px;top:825px;width:1px;height:21px;background:#d4d9e6"></div><div class="t" style="left:37px;width:195px;overflow:hidden;top:825px;color:#000">Technical Managing Director</div><div class="t" style="left:237px;width:162px;overflow:hidden;top:825px;color:#000">BM</div><div class="t" style="left:404px;width:145px;overflow:hidden;top:825px;color:#000">Business Management</div><div class="t" style="left:550px;width:123px;text-align:right;top:825px;color:#000">105</div><div class="t" style="left:681px;top:825px;color:#000">[EditValue is null]</div></div><svg class="a" style="left:19px;top:552px" width="13" height="20"><path d="M3.5 14.5 L3.5 12.5 L6.8 5.5 A1.7 1.7 0 0 1 10 6.5 L6.3 14.5 Z" fill="#fff" stroke="#222" stroke-width="1"/><circle cx="8.4" cy="5.9" r="1.1" fill="#999"/><rect x="7" y="14" width="1" height="1" fill="#222"/><rect x="9" y="14" width="1" height="1" fill="#222"/></svg><div class="a" style="left:677px;top:552px;width:124px;height:20px;background:#fff;border:1px dotted #000"></div><div class="t" style="left:681px;top:552px">ASO</div><div class="a" style="left:787px;top:553px;width:13px;height:17px;background:linear-gradient(#f9b45e 0,#fbd9b0 40%,#f9a63a 50%,#fbb448 80%,#fde3a8 100%)"></div><svg class="a" style="left:787px;top:553px" width="13" height="17"><path d="M3.5 8 h6 l-3 3.5 z" fill="#3c3c3c"/></svg><div class="a" style="left:1613px;top:124px;width:17px;height:710px;background:#4a4a4a;border-left:1px solid #2c3034;border-right:1px solid #2c3034"></div><div class="a" style="left:1613px;top:124px;width:17px;height:18px;background:#4a4a4a;border:1px solid #2c3034"></div><svg class="a" style="left:1613px;top:124px" width="17" height="18"><defs><linearGradient id="ua" x1="0" y1="0" x2="0" y2="1"><stop offset="0" stop-color="#f0f0f0"/><stop offset="1" stop-color="#bdbdbd"/></linearGradient></defs><path d="M3.5 10.5 L8.5 5 L13.5 10.5 Z" fill="url(#ua)"/></svg><div class="a" style="left:1613px;top:141px;width:17px;height:598px;border:1px solid #2c3034;background:linear-gradient(90deg,#fff 0,#fff 1px,#e4e4e4 1px,#e0e0e0 7px,#c9c9cb 7px,#c6c6c8 14px,#eeeeee 14px,#eeeeee 15px)"></div><div class="a" style="left:1617px;top:436px;width:9px;height:1px;background:#555"></div><div class="a" style="left:1617px;top:438px;width:9px;height:1px;background:#555"></div><div class="a" style="left:1617px;top:440px;width:9px;height:1px;background:#555"></div><div class="a" style="left:1617px;top:442px;width:9px;height:1px;background:#555"></div><svg class="a" style="left:1613px;top:816px" width="17" height="18"><defs><linearGradient id="da" x1="0" y1="0" x2="0" y2="1"><stop offset="0" stop-color="#f0f0f0"/><stop offset="1" stop-color="#bdbdbd"/></linearGradient></defs><path d="M3.5 8 L13.5 8 L8.5 13.5 Z" fill="url(#da)"/></svg><div class="a" style="left:1613px;top:833px;width:17px;height:1px;background:#2c3034"></div><div class="a" style="left:678px;top:571px;width:353px;height:197px;background:#fff;border:1px solid #7c7c7c;box-shadow:3px 3px 3px rgba(0,0,0,0.45);z-index:10"></div><div class="a" style="left:680px;top:573px;width:348px;height:23px;background:linear-gradient(#f7f7f7,#e7e7e7);border:1px solid #8a8a8a;border-right:1px solid #a0a0a0;z-index:11"></div><svg class="a" style="left:680px;top:573px;z-index:12" width="5" height="5"><path d="M0 0 H5 Q1 1 0 5 Z" fill="#5a5a5a"/></svg><svg class="a" style="left:1022px;top:573px;z-index:12" width="6" height="6"><path d="M0 0 H6 V6 Q6 1 0 0 Z" fill="#2a2a2a"/></svg><div class="a" style="left:810px;top:574px;width:1px;height:21px;background:#a8a8a8;z-index:12"></div><div class="t" style="left:684px;top:573px;z-index:12">Affectation court</div><div class="t" style="left:815px;top:573px;z-index:12">Type d'affectation</div><div class="a" style="left:810px;top:596px;width:1px;height:149px;background:#d4d9e6;z-index:12"></div><div class="t" style="left:684px;top:594px;z-index:13">-</div><div class="t" style="left:815px;top:594px;z-index:13">-</div><div class="t" style="left:684px;top:613px;z-index:13">WSO</div><div class="t" style="left:815px;top:613px;z-index:13">Work Safety Officer</div><div class="t" style="left:684px;top:631px;z-index:13">DPO</div><div class="t" style="left:815px;top:631px;z-index:13">Data Privacy Officer</div><div class="t" style="left:684px;top:649px;z-index:13">ASO</div><div class="t" style="left:815px;top:649px;z-index:13">Apprenticeship Office</div><div class="t" style="left:684px;top:667px;z-index:13">DGO</div><div class="t" style="left:815px;top:667px;z-index:13">Dangerous Goods Officer</div><div class="t" style="left:684px;top:685px;z-index:13">FRS</div><div class="t" style="left:815px;top:685px;z-index:13">First Responders</div><div class="a" style="left:680px;top:704px;width:130px;height:18px;border:1px solid #e8872c;border-right:none;border-radius:3px 0 0 3px;background:linear-gradient(#eca466 0%,#f2a45c 40%,#f7931f 52%,#fabb3c 80%,#fde08c 100%);z-index:12"></div><div class="a" style="left:811px;top:704px;width:218px;height:18px;border:1px solid #e8872c;border-left:none;border-radius:0 3px 3px 0;background:linear-gradient(#eca466 0%,#f2a45c 40%,#f7931f 52%,#fabb3c 80%,#fde08c 100%);z-index:12"></div><div class="t" style="left:684px;top:703px;z-index:13">FPO</div><div class="t" style="left:815px;top:703px;z-index:13">Fire Prevention Officer</div><div class="t" style="left:684px;top:721px;z-index:13">FIR</div><div class="t" style="left:815px;top:721px;z-index:13">Firemen</div><div class="a" style="left:680px;top:745px;width:349px;height:21px;background:#e4e4e4;z-index:12"></div><svg class="a" style="left:680px;top:745px;z-index:13" width="349" height="21"><path d="M8 7 L14 12.5 M14 7 L8 12.5" stroke="#333" stroke-width="1.4"/><rect x="344" y="8" width="2" height="2" fill="#111"/><rect x="340" y="12" width="2" height="2" fill="#111"/><rect x="344" y="12" width="2" height="2" fill="#111"/><rect x="336" y="16" width="2" height="2" fill="#111"/><rect x="340" y="16" width="2" height="2" fill="#111"/><rect x="344" y="16" width="2" height="2" fill="#111"/></svg></div></body></html>
